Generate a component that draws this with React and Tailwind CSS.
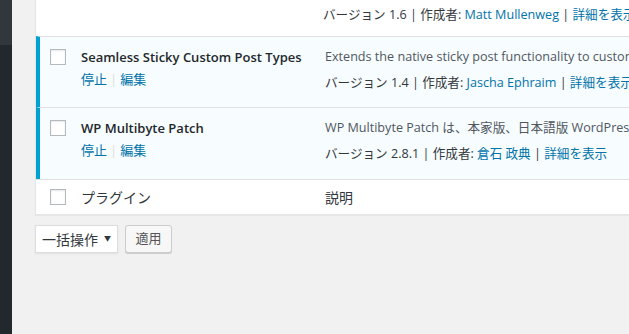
import React from "react";

const latin = { fontFamily: '"Open Sans", "Noto Sans CJK JP", sans-serif' };

function Checkbox() {
  return <div className="h-4 w-4 border border-[#b4b9be] bg-white shadow-[inset_0_1px_2px_rgba(0,0,0,0.1)]" />;
}

function Meta({ version, author }) {
  return (
    <div className="whitespace-nowrap text-[12.6px] text-[#32373c]">
      バージョン {version} | 作成者: <span className="text-[#0073aa]">{author}</span> |{" "}
      <span className="text-[#0073aa]">詳細を表示</span>
    </div>
  );
}

function PluginRow({ title, desc, version, author, h }) {
  return (
    <div className={`flex ${h} border-t border-[#e1e1e1] border-l-4 border-l-[#00a0d2] bg-[#f7fcfe]`}>
      <div className="w-[41px] shrink-0 pl-[10px] pt-[12px]">
        <Checkbox />
      </div>
      <div className="w-[244px] shrink-0 pt-[9px]">
        <div className="whitespace-nowrap text-[13px] font-semibold leading-[22px] text-[#23282d]">{title}</div>
        <div className="mt-[1px] flex text-[13px] leading-[20px] text-[#0073aa]">
          <span>停止</span>
          <span className="mx-[3px] text-[#ddd]">|</span>
          <span>編集</span>
        </div>
      </div>
      <div className="flex-1 pt-[9px]">
        <div className="whitespace-nowrap text-[12.6px] leading-[22px] text-[#50575e]">{desc}</div>
        <div className="mt-[5px] leading-[20px]">
          <Meta version={version} author={author} />
        </div>
      </div>
    </div>
  );
}

export default function App() {
  return (
    <div className="flex h-[334px] w-[629px] overflow-hidden bg-[#f1f1f1]" style={latin}>
      <div className="flex w-[12px] shrink-0 flex-col">
        <div className="h-[45px] bg-[#32373c]" />
        <div className="flex-1 bg-[#23282d]" />
      </div>
      <div className="ml-[23px] flex w-[800px] shrink-0 flex-col">
        <div className="border border-t-0 border-[#e5e5e5] bg-white shadow-[0_1px_1px_rgba(0,0,0,0.04)]">
          <div className="flex h-[36px] items-end pb-[11px] pl-[287px]">
            <Meta version="1.6" author="Matt Mullenweg" />
          </div>
          <PluginRow
            h="h-[71px]"
            title="Seamless Sticky Custom Post Types"
            desc="Extends the native sticky post functionality to custom post types."
            version="1.4"
            author="Jascha Ephraim"
          />
          <PluginRow
            h="h-[72px]"
            title="WP Multibyte Patch"
            desc="WP Multibyte Patch は、本家版、日本語版 WordPress のマルチバイト文字の取り扱いに関する不具合の累積的修正と強化を行うプラグインです。"
            version="2.8.1"
            author="倉石 政典"
          />
          <div className="flex h-[35px] items-center border-t border-[#e1e1e1]">
            <div className="w-[45px] shrink-0 pl-[14px]">
              <Checkbox />
            </div>
            <div className="w-[244px] shrink-0 text-[14px] text-[#32373c]">プラグイン</div>
            <div className="text-[14px] text-[#32373c]">説明</div>
          </div>
        </div>
        <div className="mt-[10px] flex items-start gap-[7px]">
          <div className="flex h-[28px] w-[83px] items-center justify-between border border-[#ddd] bg-white pl-[6px] pr-[6px] text-[14px] text-[#32373c] shadow-[0_1px_2px_rgba(0,0,0,0.07)]">
            <span>一括操作</span>
            <span className="text-[7px]">▼</span>
          </div>
          <div className="flex h-[28px] w-[47px] items-center justify-center rounded-[3px] border border-[#ccc] bg-[#f7f7f7] text-[13px] text-[#555] shadow-[0_1px_0_#ccc]">
            適用
          </div>
        </div>
      </div>
    </div>
  );
}
